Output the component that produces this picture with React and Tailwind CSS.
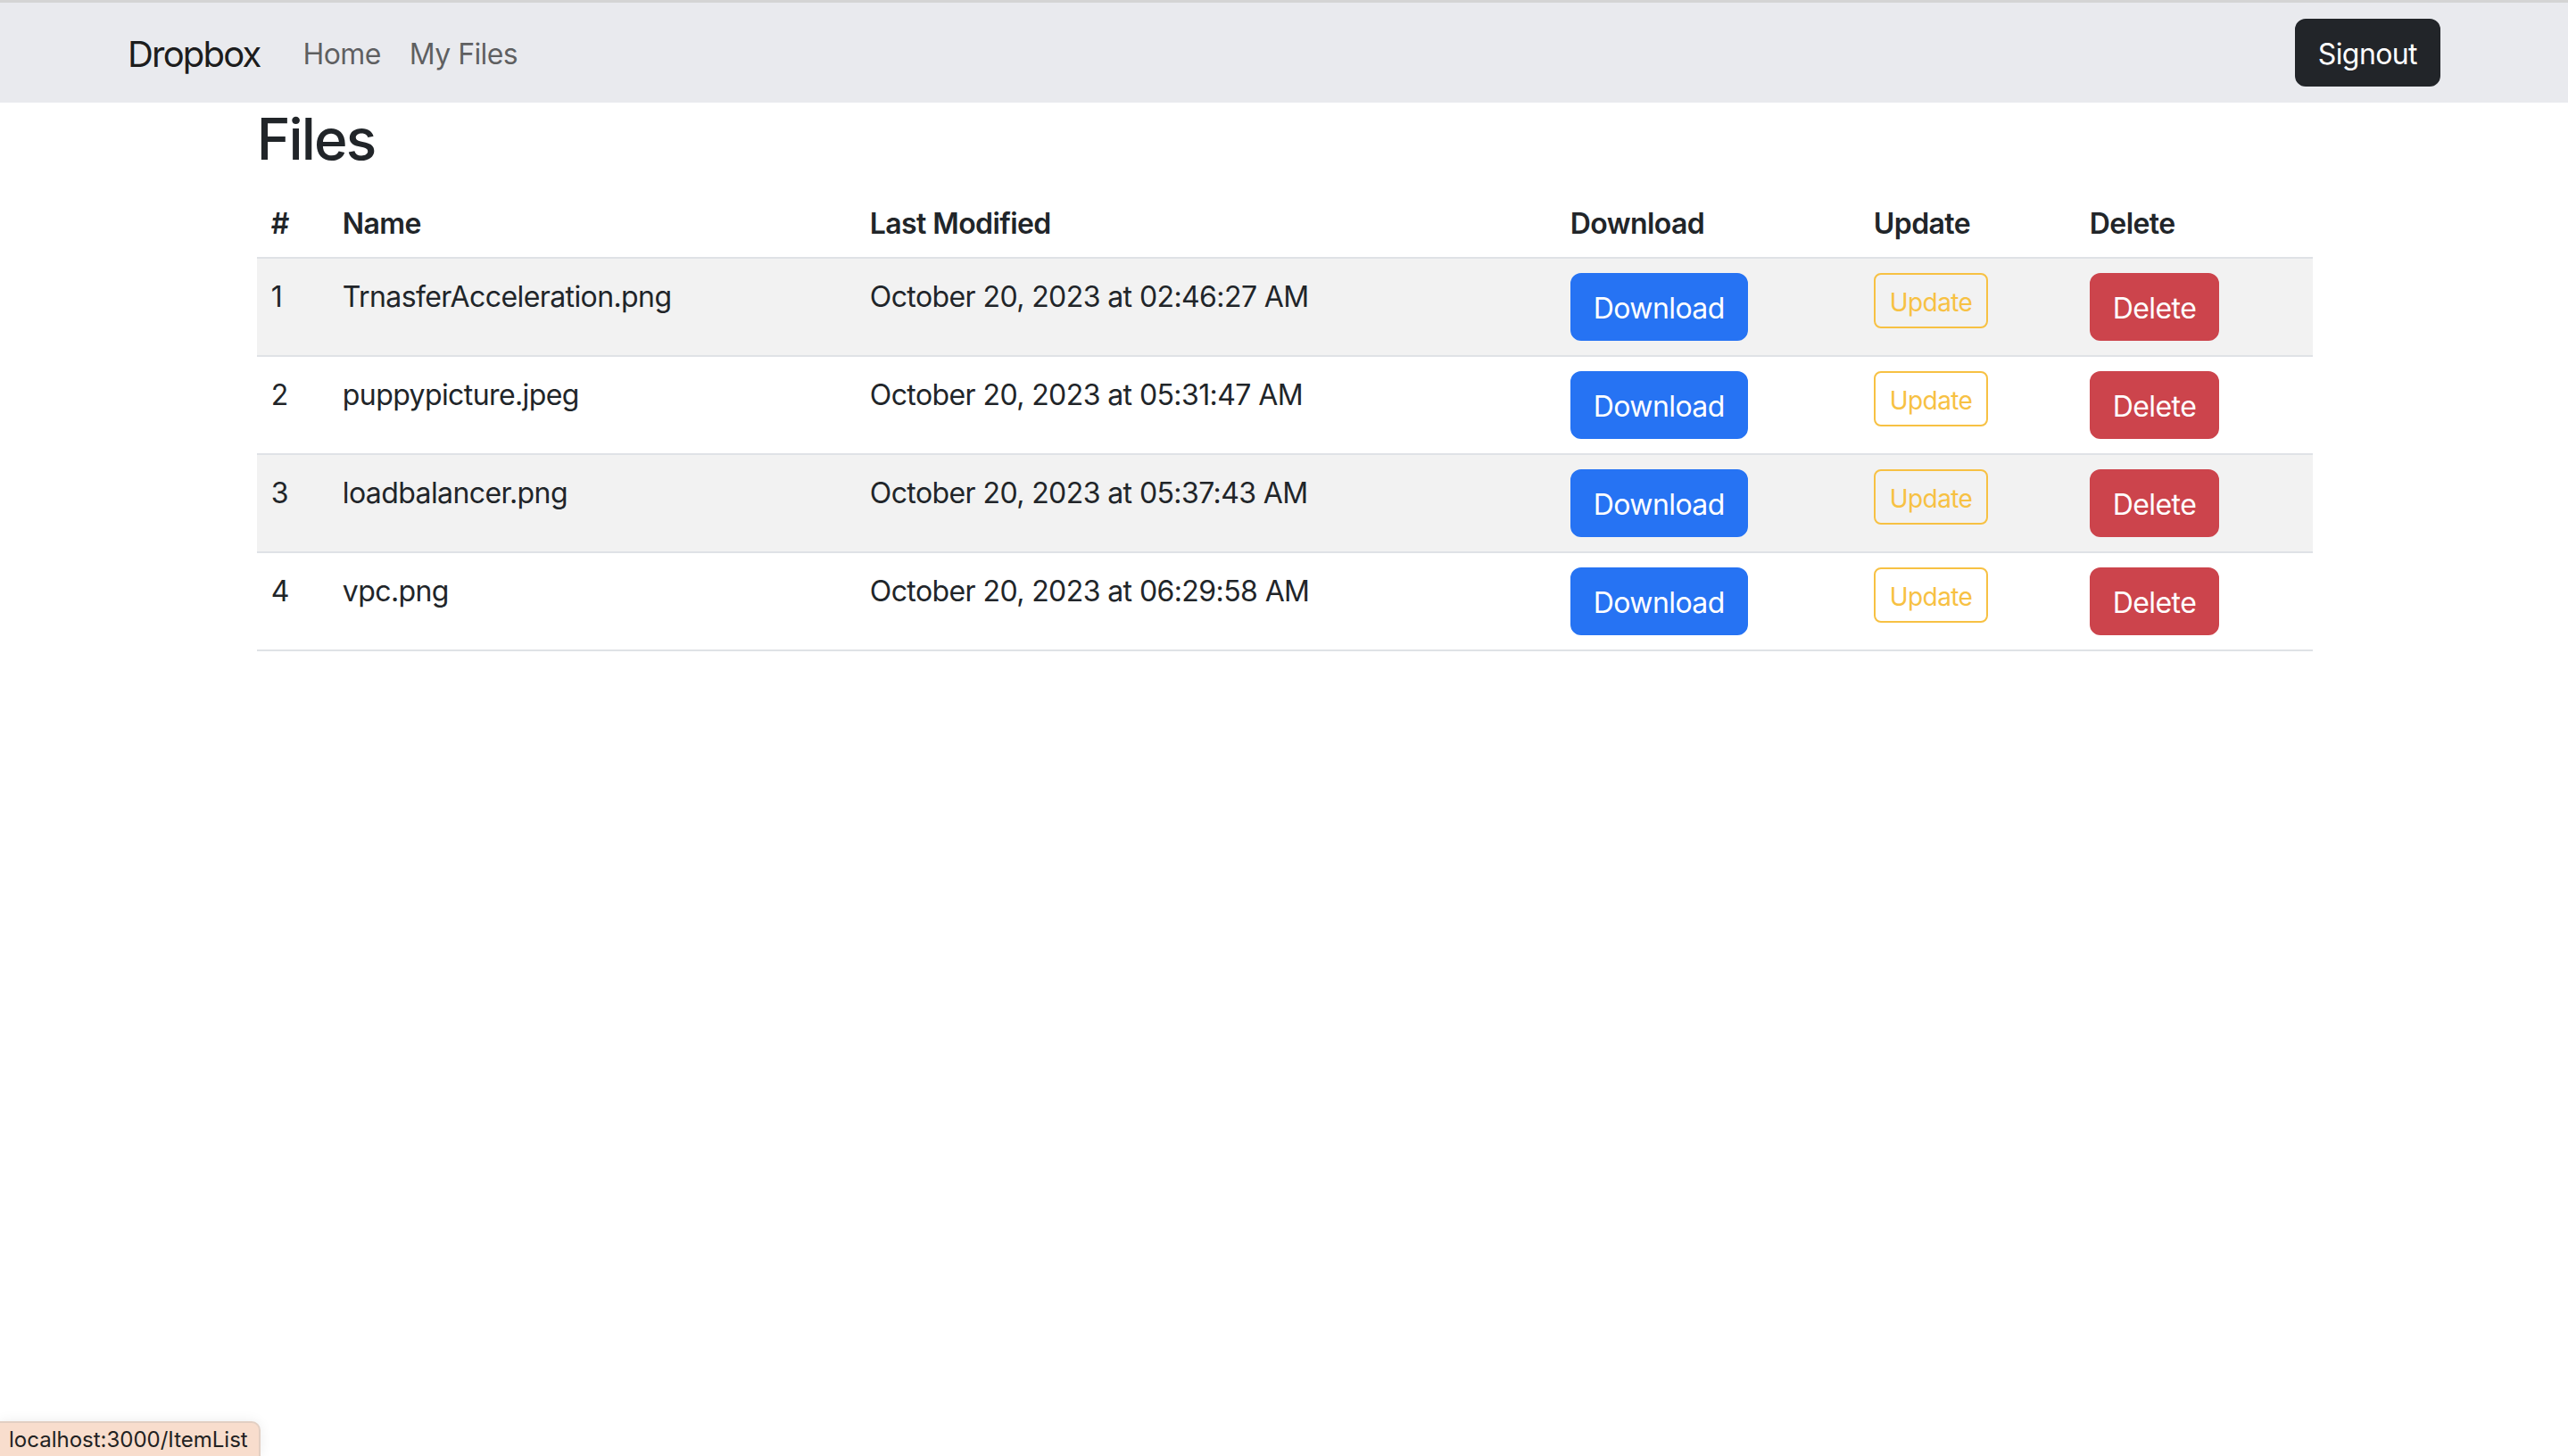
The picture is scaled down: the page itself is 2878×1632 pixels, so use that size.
import React from "react";

const rows = [
  { n: 1, name: "TrnasferAcceleration.png", date: "October 20, 2023 at 02:46:27 AM" },
  { n: 2, name: "puppypicture.jpeg", date: "October 20, 2023 at 05:31:47 AM" },
  { n: 3, name: "loadbalancer.png", date: "October 20, 2023 at 05:37:43 AM" },
  { n: 4, name: "vpc.png", date: "October 20, 2023 at 06:29:58 AM" },
];

export default function App() {
  return (
    <div
      className="relative min-h-[1632px] bg-white text-[#212529] tracking-[-0.037em]"
      style={{ fontFamily: "Inter, 'Noto Sans', 'Liberation Sans', sans-serif" }}
    >
      <div className="h-[3px] bg-[#d4d4d4]" />
      <nav className="bg-[#e9eaee] h-[112px]">
        <div className="w-[2640px] mx-auto px-[24px] h-full flex items-center justify-between">
          <div className="flex items-center pt-[4px]">
            <span className="text-[40px] leading-[60px] text-black/90 mr-[32px] tracking-[-0.045em]">Dropbox</span>
            <span className="text-[32px] leading-[48px] px-[16px] text-black/60">Home</span>
            <span className="text-[32px] leading-[48px] px-[16px] text-black/60">My Files</span>
          </div>
          <button className="bg-[#222529] border-2 border-[#222529] text-white text-[32px] leading-[48px] px-[24px] pt-[14px] pb-[10px] rounded-[12px]">
            Signout
          </button>
        </div>
      </nav>
      <main className="w-[80%] mx-auto">
        <h2 className="text-[64px] leading-[1.2] font-medium pt-[3px] mb-[13px] tracking-[-0.03em]">Files</h2>
        <table className="w-full table-fixed border-collapse text-[32px] leading-[48px]">
          <colgroup>
            <col className="w-[80px]" />
            <col className="w-[591px]" />
            <col className="w-[785px]" />
            <col className="w-[340px]" />
            <col className="w-[242px]" />
            <col className="w-[266px]" />
          </colgroup>
          <thead>
            <tr className="border-b-2 border-[#dfe2e6]">
              {["#", "Name", "Last Modified", "Download", "Update", "Delete"].map((h) => (
                <th key={h} className="text-left font-semibold px-[16px] pt-[19px] pb-[13px] align-top">
                  {h}
                </th>
              ))}
            </tr>
          </thead>
          <tbody>
            {rows.map((r, i) => (
              <tr
                key={r.n}
                className={`border-b-2 border-[#dfe2e6] ${i % 2 === 0 ? "bg-[#f2f2f2]" : "bg-white"}`}
              >
                <td className="px-[16px] pt-[19px] pb-[13px] align-top">{r.n}</td>
                <td className="px-[16px] pt-[19px] pb-[13px] align-top">{r.name}</td>
                <td className="px-[16px] pt-[19px] pb-[13px] align-top">{r.date}</td>
                <td className="p-[16px] align-top">
                  <button className="bg-[#2673f3] border-2 border-[#2673f3] text-white text-[32px] leading-[48px] px-[24px] pt-[14px] pb-[10px] rounded-[12px]">
                    Download
                  </button>
                </td>
                <td className="p-[16px] align-top">
                  <button className="border-2 border-[#f7c143] text-[#f7c143] text-[28px] leading-[42px] px-[16px] pt-[10px] pb-[6px] rounded-[8px]">
                    Update
                  </button>
                </td>
                <td className="p-[16px] align-top">
                  <button className="bg-[#cc444c] border-2 border-[#cc444c] text-white text-[32px] leading-[48px] px-[24px] pt-[14px] pb-[10px] rounded-[12px]">
                    Delete
                  </button>
                </td>
              </tr>
            ))}
          </tbody>
        </table>
      </main>
      <div className="absolute left-0 bottom-0 h-[39px] w-[292px] bg-[#f8ddcd] border-t-2 border-r-2 border-[#e2cfc3] rounded-tr-[10px] shadow-[0_0_14px_rgba(0,0,0,0.08)] flex items-center pl-[10px] text-[24px] text-[#222] tracking-normal">
        localhost:3000/ItemList
      </div>
    </div>
  );
}
